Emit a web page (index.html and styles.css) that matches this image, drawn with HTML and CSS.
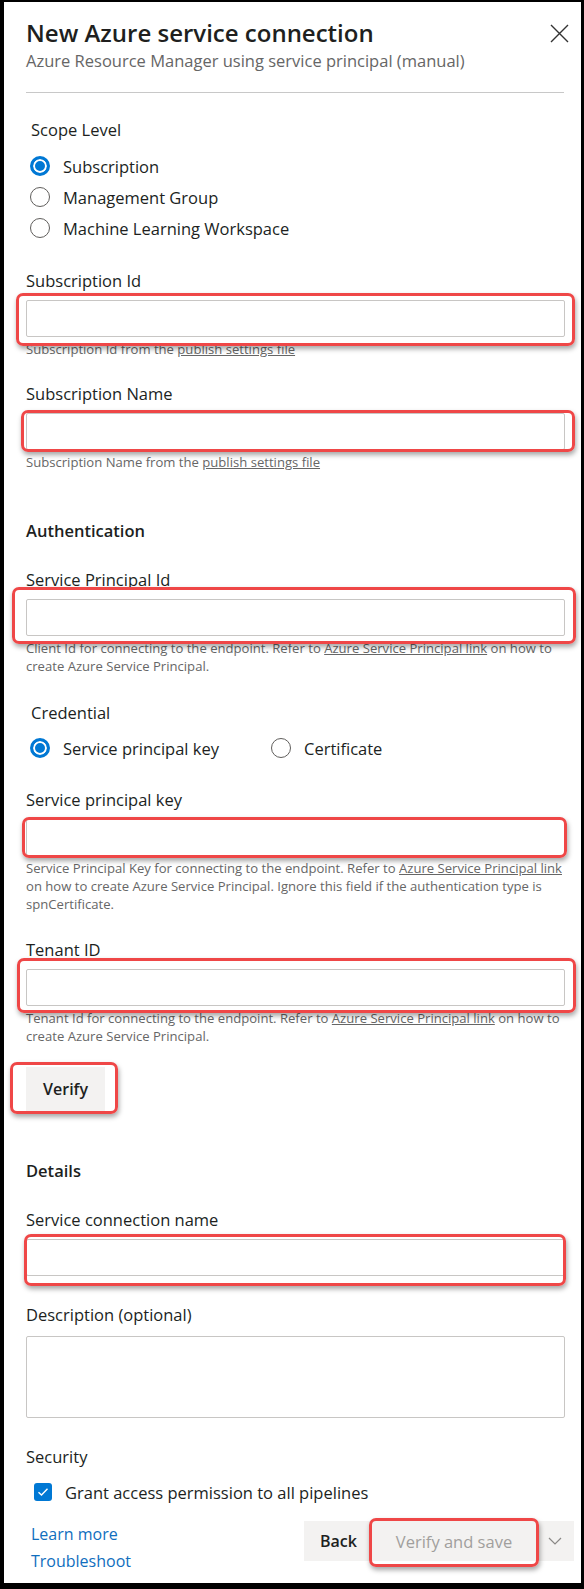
FILE: index.html
```html
<!DOCTYPE html>
<html lang="en">
<head>
<meta charset="utf-8">
<title>New Azure service connection</title>
<link rel="stylesheet" href="styles.css">
</head>
<body>
<div class="frame">
  <header class="head">
    <div class="titles">
      <h1 class="title">New Azure service connection</h1>
      <p class="subtitle">Azure Resource Manager using service principal (manual)</p>
    </div>
    <button class="close" aria-label="Close">
      <svg width="19" height="19" viewBox="0 0 19 19"><path d="M1 1 L18 18 M18 1 L1 18" stroke="#333" stroke-width="1.4" fill="none"/></svg>
    </button>
  </header>
  <div class="divider"></div>

  <main class="content">
    <div class="group-label scope-label">Scope Level</div>
    <div class="radio-list">
      <label class="radio"><span class="dot on"></span>Subscription</label>
      <label class="radio"><span class="dot"></span>Management Group</label>
      <label class="radio"><span class="dot"></span>Machine Learning Workspace</label>
    </div>

    <div class="field f-subid">
      <div class="label">Subscription Id</div>
      <div class="input-wrap"><div class="input"></div><span class="callout c-subid"></span></div>
      <div class="help">Subscription Id from the <u>publish settings file</u></div>
    </div>

    <div class="field f-subname">
      <div class="label">Subscription Name</div>
      <div class="input-wrap"><div class="input"></div><span class="callout c-subname"></span></div>
      <div class="help">Subscription Name from the <u>publish settings file</u></div>
    </div>

    <div class="section-title auth">Authentication</div>

    <div class="field f-spid">
      <div class="label">Service Principal Id</div>
      <div class="input-wrap"><div class="input"></div><span class="callout c-spid"></span></div>
      <div class="help">Client Id for connecting to the endpoint. Refer to <u>Azure Service Principal link</u> on how to<br>create Azure Service Principal.</div>
    </div>

    <div class="group-label cred-label">Credential</div>
    <div class="radio-row">
      <label class="radio first"><span class="dot on"></span>Service principal key</label>
      <label class="radio"><span class="dot"></span>Certificate</label>
    </div>

    <div class="field f-spkey">
      <div class="label">Service principal key</div>
      <div class="input-wrap"><div class="input"></div><span class="callout c-spkey"></span></div>
      <div class="help">Service Principal Key for connecting to the endpoint. Refer to <u>Azure Service Principal link</u><br>on how to create Azure Service Principal. Ignore this field if the authentication type is<br>spnCertificate.</div>
    </div>

    <div class="field f-tenant">
      <div class="label">Tenant ID</div>
      <div class="input-wrap"><div class="input"></div><span class="callout c-tenant"></span></div>
      <div class="help">Tenant Id for connecting to the endpoint. Refer to <u>Azure Service Principal link</u> on how to<br>create Azure Service Principal.</div>
    </div>

    <div class="verify-wrap">
      <button class="btn verify">Verify</button>
      <span class="callout c-verify"></span>
    </div>

    <div class="section-title details">Details</div>

    <div class="field f-scn">
      <div class="label">Service connection name</div>
      <div class="input-wrap"><div class="input"></div><span class="callout c-scn"></span></div>
    </div>

    <div class="field f-desc">
      <div class="label">Description (optional)</div>
      <div class="textarea"></div>
    </div>

    <div class="group-label sec-label">Security</div>
    <label class="check"><span class="box"><svg width="12" height="10" viewBox="0 0 12 10"><path d="M1.5 5.2 L4.5 8 L10.5 1.8" stroke="#fff" stroke-width="1.4" fill="none"/></svg></span>Grant access permission to all pipelines</label>
  </main>

  <footer class="foot">
    <div class="links">
      <a class="link">Learn more</a>
      <a class="link">Troubleshoot</a>
    </div>
    <div class="actions">
      <button class="btn back">Back</button>
      <div class="save-wrap">
        <button class="btn save">Verify and save</button>
        <span class="callout c-save"></span>
      </div>
      <button class="btn more" aria-label="More">
        <svg width="14" height="8" viewBox="0 0 14 8"><path d="M1 1 L7 7 L13 1" stroke="#8a8886" stroke-width="1.2" fill="none"/></svg>
      </button>
    </div>
  </footer>
</div>
</body>
</html>
```

FILE: styles.css
```css
* { box-sizing: border-box; }
html, body { margin: 0; padding: 0; }
body {
  font-family: "Open Sans", "Noto Sans", sans-serif;
  color: #201f1e;
  background: #000;
}
.frame {
  width: 584px;
  height: 1589px;
  background: #fff;
  border-style: solid;
  border-color: #000;
  border-width: 2px 3px 6px 4px;
  display: flex;
  flex-direction: column;
}
.head {
  display: flex;
  justify-content: space-between;
  align-items: flex-start;
  padding: 15px 12px 0 22px;
}
.title {
  margin: 0;
  font-size: 24px;
  line-height: 32px;
  font-weight: 600;
  color: #201f1e;
}
.subtitle {
  margin: 2px 0 0;
  font-size: 16.5px;
  line-height: 20px;
  color: #666;
}
.close {
  margin-top: 7px;
  width: 19px;
  height: 19px;
  padding: 0;
  border: 0;
  background: none;
  display: flex;
}
.divider {
  height: 1px;
  background: #c8c8c8;
  margin: 21px 17px 0 22px;
}
.content {
  padding: 0 16px 0 22px;
  display: flex;
  flex-direction: column;
}
.group-label, .label {
  font-size: 16.5px;
  line-height: 24px;
}
.group-label { padding-left: 5px; }
.sec-label { padding-left: 0; }
.scope-label { margin-top: 25px; }
.cred-label { margin-top: 26px; }
.sec-label { margin-top: 27px; }

.radio-list {
  display: flex;
  flex-direction: column;
  gap: 7px;
  margin-top: 12px;
}
.radio-row {
  display: flex;
  margin-top: 11px;
}
.radio {
  display: flex;
  align-items: center;
  height: 24px;
  font-size: 16.5px;
  padding-left: 4px;
}
.radio.first { width: 241px; }
.dot {
  width: 20px;
  height: 20px;
  border-radius: 50%;
  border: 1px solid #605e5c;
  margin-right: 13px;
  flex: none;
  background: #fff;
}
.dot.on {
  border: 3px solid #0078d4;
  background: #0078d4;
  box-shadow: inset 0 0 0 2px #fff;
}

.field { display: flex; flex-direction: column; }
.f-subid { margin-top: 29px; }
.f-subname { margin-top: 24px; }
.f-spid { margin-top: 25px; }
.f-spkey { margin-top: 28px; }
.f-tenant { margin-top: 25px; }
.f-scn { margin-top: 25px; }
.f-desc { margin-top: 27px; }

.section-title {
  font-size: 16.5px;
  line-height: 24px;
  font-weight: 600;
}
.auth { margin-top: 48px; }
.details { margin-top: 48px; }

.input-wrap { position: relative; margin-top: 7px; }
.input {
  height: 37px;
  border: 1px solid #c8c6c4;
  border-radius: 2px;
  background: #fff;
}
.textarea {
  margin-top: 9px;
  height: 82px;
  border: 1px solid #c8c6c4;
  border-radius: 2px;
}
.help {
  margin-top: 3px;
  font-size: 13.1px;
  line-height: 18px;
  color: #666;
  white-space: nowrap;
}
.help u { text-decoration-color: #666; }

.callout {
  position: absolute;
  border: 3px solid #ef4747;
  border-radius: 7px;
  box-shadow: 1px 3px 5px rgba(0, 0, 0, 0.35);
  pointer-events: none;
}
.c-subid { left: -10px; right: -10px; top: -7px; bottom: -9px; }
.c-subname { left: -5px; right: -10px; top: -3px; bottom: -2px; }
.c-spid { left: -14px; right: -11px; top: -12px; bottom: -8px; }
.c-spkey { left: -4px; right: -2px; top: -2px; bottom: -2px; }
.c-tenant { left: -9px; right: -11px; top: -11px; bottom: -7px; }
.c-scn { left: -2px; right: -1px; top: -5px; bottom: -10px; }
.c-verify { left: -16px; right: -13px; top: -5px; bottom: -3px; }
.c-save { left: -4px; right: -4px; top: -3px; bottom: -6px; }

.btn {
  font-family: inherit;
  border: 0;
  background: #f3f2f1;
  color: #201f1e;
  font-size: 16.5px;
  padding: 0;
}
.verify-wrap {
  position: relative;
  align-self: flex-start;
  margin-top: 22px;
}
.verify {
  width: 79px;
  height: 44px;
  font-weight: 600;
  display: block;
  font-size: 16px;
}

.check {
  display: flex;
  align-items: center;
  height: 24px;
  margin-top: 11px;
  padding-left: 8px;
  font-size: 16.5px;
}
.box {
  width: 18px;
  height: 18px;
  border-radius: 3px;
  background: #0078d4;
  display: flex;
  align-items: center;
  justify-content: center;
  margin-right: 13px;
}

.foot {
  display: flex;
  justify-content: space-between;
  align-items: flex-start;
  padding: 17px 7px 0 27px;
}
.links { display: flex; flex-direction: column; }
.link {
  color: #106ebe;
  font-size: 16px;
  line-height: 27px;
}
.actions { display: flex; height: 40px; background: #f3f2f1; }
.back { width: 69px; height: 40px; font-weight: 600; font-size: 16px; }
.save-wrap { position: relative; }
.save { width: 162px; height: 40px; color: #a19f9d; display: block; }
.more { width: 39px; height: 40px; display: flex; align-items: center; justify-content: center; }
```
